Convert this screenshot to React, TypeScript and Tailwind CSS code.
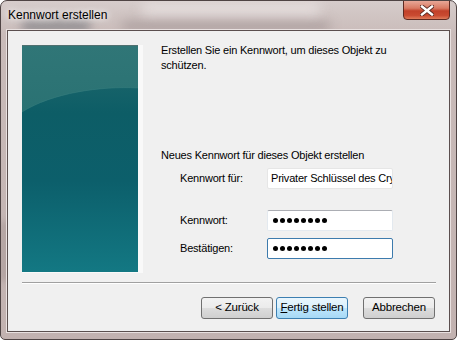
import * as React from 'react'

const font = { fontFamily: '"Segoe UI", "Liberation Sans", Arial, sans-serif' }

const PasswordDots = () => (
  <div className="flex items-center gap-[2px] pl-[5px]">
    {Array.from({ length: 8 }).map((_, i) => (
      <div key={i} className="w-[5px] h-[5px] rounded-full bg-black" />
    ))}
  </div>
)

const TealPanel = () => (
  <div className="w-[121px] h-[228px] border-r-[5px] border-b border-[#f9f9f9] bg-[#f9f9f9] shrink-0">
    <svg width="116" height="227" viewBox="0 0 116 227" className="block">
      <defs>
        <linearGradient id="base" x1="0" y1="0" x2="0" y2="1">
          <stop offset="0" stopColor="#236b6e" />
          <stop offset="0.3" stopColor="#0d5d66" />
          <stop offset="0.6" stopColor="#0c5f6b" />
          <stop offset="1" stopColor="#137883" />
        </linearGradient>
        <linearGradient id="top" x1="0" y1="0" x2="0" y2="1">
          <stop offset="0" stopColor="#307677" />
          <stop offset="1" stopColor="#2a7273" />
        </linearGradient>
      </defs>
      <rect width="116" height="227" fill="url(#base)" />
      <path d="M0 0 H116 V43 C 78 41, 30 48, 0 67 Z" fill="url(#top)" />
      <path d="M0 67 C 30 48, 78 41, 116 43" fill="none" stroke="#3f8485" strokeOpacity="0.4" strokeWidth="1" />
      <rect x="0" y="0" width="116" height="1" fill="#6f6a6a" opacity="0.5" />
    </svg>
  </div>
)

const TextBox = ({ children, focused, readOnly }: { children: React.ReactNode; focused?: boolean; readOnly?: boolean }) => (
  <div
    className={`w-[126px] h-[21px] bg-white flex items-center overflow-hidden rounded-[2px] border ${
      focused
        ? 'border-[#3d7bad] border-t-[#3d7bad]'
        : readOnly
          ? 'border-[#e6e6e6]'
          : 'border-[#e3e9ef] border-t-[#abadb3]'
    }`}
  >
    {children}
  </div>
)

const Button = ({ children, primary }: { children: React.ReactNode; primary?: boolean }) => (
  <button
    type="button"
    className={`w-[72px] h-[22px] rounded-[3px] border text-[11.5px] tracking-[-0.2px] text-black flex items-center justify-center ${
      primary
        ? 'border-[#3c7fb1] bg-[linear-gradient(to_bottom,#eaf6fd_0%,#d9f0fc_50%,#bee6fd_51%,#a7d9f5_100%)]'
        : 'border-[#707070] bg-[linear-gradient(to_bottom,#f2f2f2_0%,#ebebeb_50%,#dddddd_51%,#cfcfcf_100%)]'
    }`}
    style={font}
  >
    {children}
  </button>
)

export default function App() {
  return (
    <div className="w-[457px] h-[340px] bg-white overflow-hidden" style={font}>
      <div className="relative w-[457px] h-[340px] rounded-t-[7px] rounded-b-[5px] border border-[#4f4444] bg-[linear-gradient(to_bottom,#d6cccb_0%,#c9bbb9_10%,#c2b2b0_100%)] flex flex-col overflow-hidden">
        {/* blurred aero glass spots */}
        <div className="absolute left-[20px] top-[18px] w-[70px] h-[14px] rounded-full bg-[#4d5560] opacity-40 blur-[5px]" />
        <div className="absolute left-[120px] top-[20px] w-[210px] h-[10px] rounded-full bg-[#8d7f80] opacity-50 blur-[6px]" />
        <div className="absolute left-[140px] top-[2px] w-[180px] h-[12px] rounded-full bg-[#f2eded] opacity-60 blur-[6px]" />
        <div className="absolute left-[0px] top-[220px] w-[6px] h-[60px] bg-[#8a7a78] opacity-40 blur-[3px]" />

        {/* title bar */}
        <div className="relative h-[29px] flex items-start shrink-0">
          <span className="ml-[7px] mt-[7px] text-[12px] leading-[15px] text-black [text-shadow:0_0_6px_#fff,0_0_10px_#fff]">
            Kennwort erstellen
          </span>
          <div className="absolute right-[6px] top-[-1px] w-[47px] h-[20px] rounded-b-[4px] border border-[#5e2a22] bg-[linear-gradient(to_bottom,#e8a797_0%,#d97a63_40%,#c2412a_55%,#c94a31_80%,#e07b5a_100%)] flex items-center justify-center">
            <svg width="14" height="11" viewBox="0 0 14 11">
              <path d="M2 1.5 L12 9.5 M12 1.5 L2 9.5" stroke="#5a2a22" strokeWidth="4.2" strokeLinecap="square" />
              <path d="M2 1.5 L12 9.5 M12 1.5 L2 9.5" stroke="#ffffff" strokeWidth="2.4" strokeLinecap="square" />
            </svg>
          </div>
        </div>

        {/* client area */}
        <div className="relative mx-[6px] mb-[7px] flex-1 border border-[#5b4f4e] bg-[#f0f0f0] flex flex-col shadow-[0_0_0_1px_#e9e1e0]">
          <div className="flex pl-[14px] pt-[14px]">
            <TealPanel />
            <div className="ml-[18px] flex flex-col text-[11px] tracking-[-0.2px] text-black">
              <p className="w-[240px] leading-[15px] -mt-[2px]">
                Erstellen Sie ein Kennwort, um dieses Objekt zu schützen.
              </p>
              <p className="mt-[75px] leading-[14px]">Neues Kennwort für dieses Objekt erstellen</p>
              <div className="mt-[6px] ml-[19px] grid grid-cols-[87px_126px] items-center gap-y-[7px]">
                <span>Kennwort für:</span>
                <TextBox readOnly>
                  <span className="pl-[3px] whitespace-nowrap">Privater Schlüssel des CryptoAPI</span>
                </TextBox>
                <span className="mt-[14px]">Kennwort:</span>
                <div className="mt-[14px]">
                  <TextBox>
                    <PasswordDots />
                  </TextBox>
                </div>
                <span>Bestätigen:</span>
                <TextBox focused>
                  <PasswordDots />
                </TextBox>
              </div>
            </div>
          </div>

          <div className="mx-[14px] mt-[9px] mr-[13px] h-[2px] border-t border-[#a0a0a0] border-b border-b-white" />

          <div className="flex justify-end mt-[13px] mr-[14px] gap-[3px]">
            <Button>&lt; Zurück</Button>
            <Button primary>
              <span>
                <span className="underline">F</span>ertig stellen
              </span>
            </Button>
            <div className="w-[9px]" />
            <Button>Abbrechen</Button>
          </div>
        </div>
      </div>
    </div>
  )
}
